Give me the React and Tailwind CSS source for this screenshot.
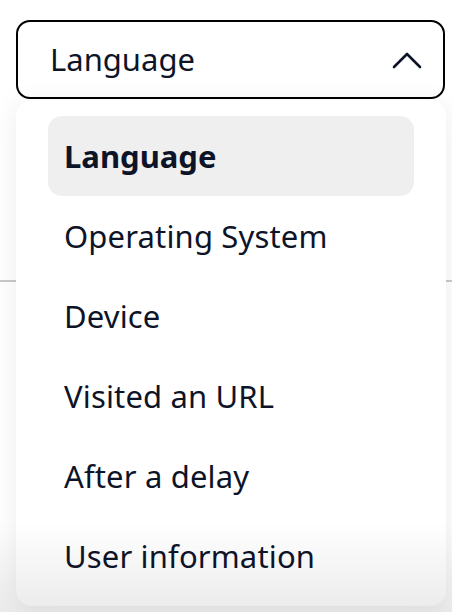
import React from "react";

const items = [
  "Language",
  "Operating System",
  "Device",
  "Visited an URL",
  "After a delay",
  "User information",
];

export default function App() {
  return (
    <div
      className="relative w-[452px] h-[612px] overflow-hidden bg-white text-[#0e1428]"
      style={{ fontFamily: '"Noto Sans", "Open Sans", sans-serif' }}
    >
      <div className="pt-[20px] px-[16px] pr-[7px]">
        <button className="w-full h-[79px] border-2 border-black rounded-[14px] flex items-center justify-between pl-[32px] pr-[21px] bg-white">
          <span className="text-[31px] leading-none">Language</span>
          <svg width="30" height="18" viewBox="0 0 30 18" fill="none">
            <path d="M2 16 L15 3 L28 16" stroke="#0e1428" strokeWidth="2.6" strokeLinecap="round" strokeLinejoin="round" />
          </svg>
        </button>
      </div>

      <div className="mt-[181px] h-[2px] bg-[#c9c9c9]" />

      <div className="absolute top-[100px] left-[16px] w-[430px] h-[506px] bg-white rounded-[16px] shadow-[0_4px_28px_rgba(0,0,0,0.08)] pt-[16px] px-[32px]">
        <ul className="flex flex-col">
          {items.map((label, i) => (
            <li
              key={label}
              className={
                i === 0
                  ? "h-[80px] flex items-center px-[16px] rounded-[14px] bg-[#efefef] text-[31px] font-bold"
                  : "h-[80px] flex items-center px-[16px] rounded-[14px] text-[31px] tracking-[0.15px]"
              }
            >
              {label}
            </li>
          ))}
        </ul>
      </div>

      <div className="pointer-events-none absolute left-0 right-0 bottom-0 h-[90px] bg-gradient-to-b from-transparent to-black/[0.08]" />
    </div>
  );
}
